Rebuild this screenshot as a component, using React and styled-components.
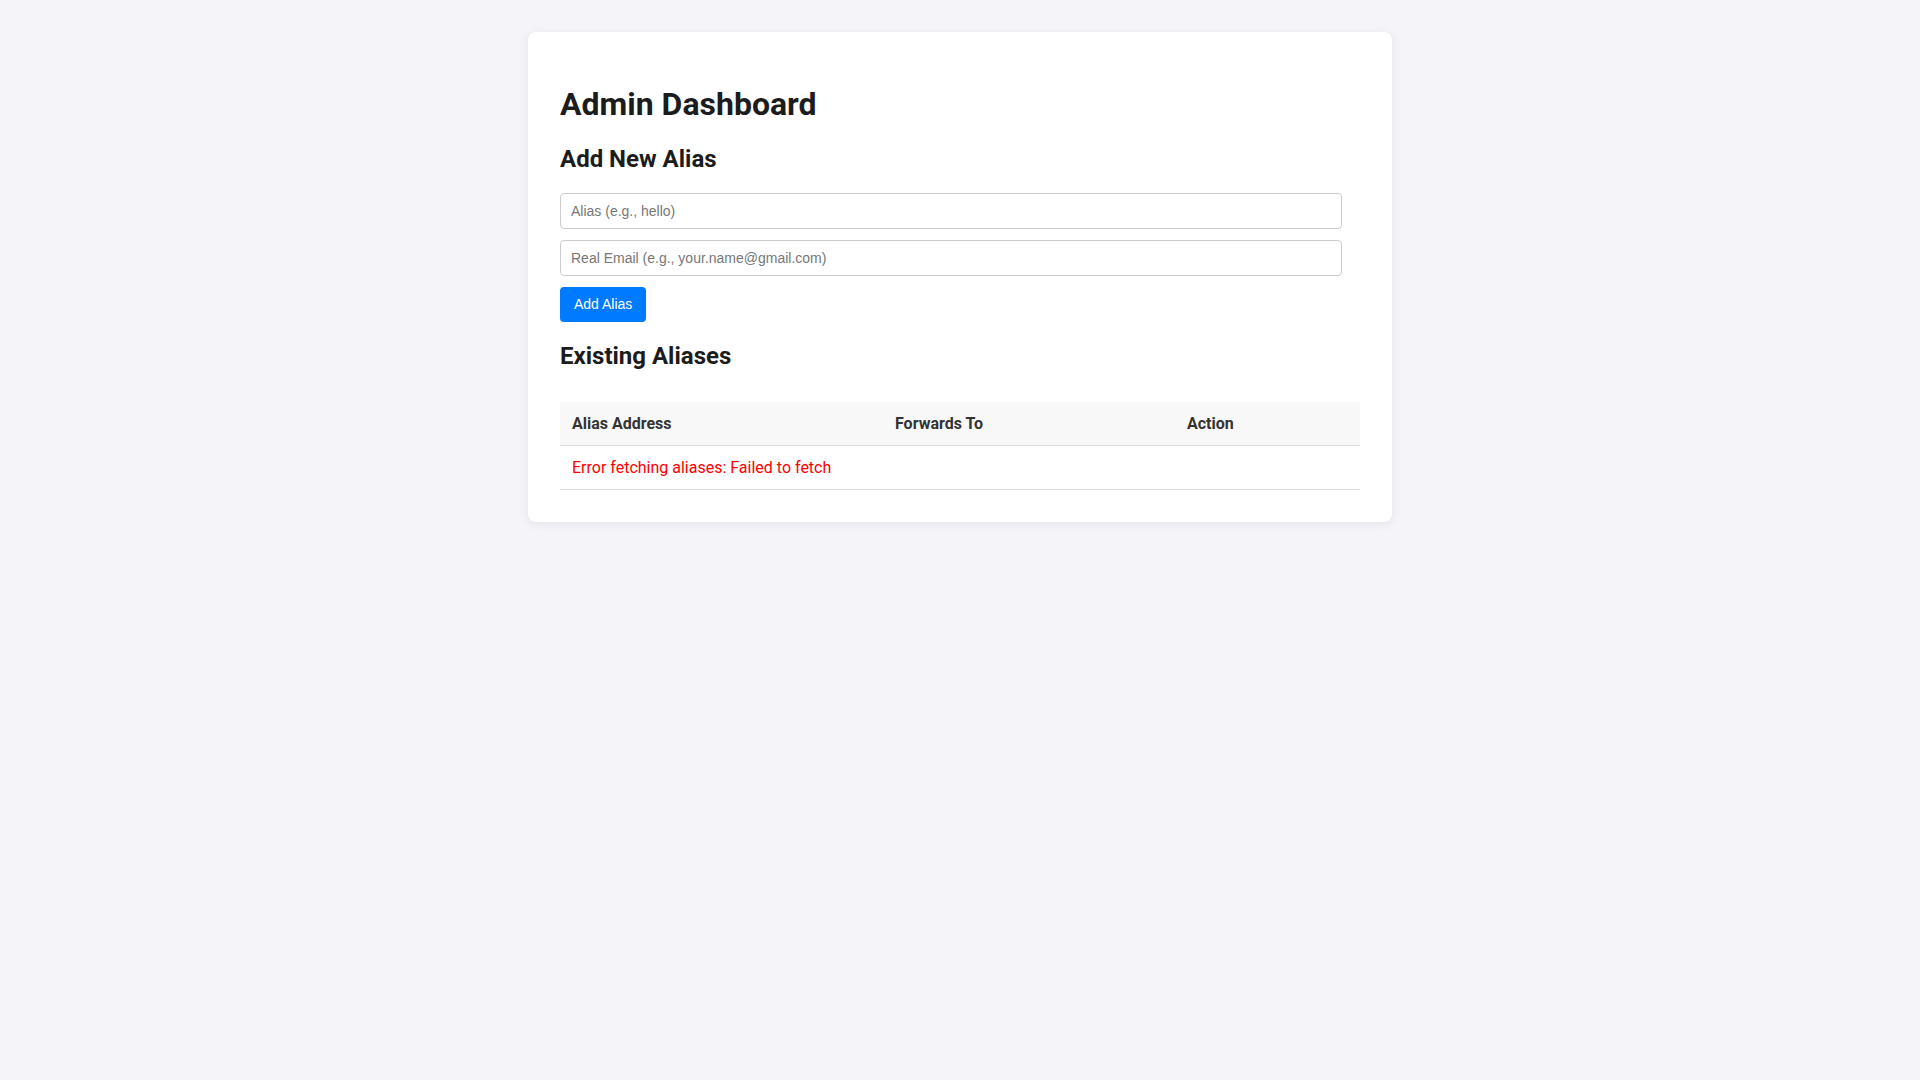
import styled, { createGlobalStyle } from "styled-components";
import { useState } from "react";

const GlobalStyle = createGlobalStyle`
  body {
    margin: 0;
    padding: 32px 0;
    background: #f4f4f9;
    font-family: Roboto, "Liberation Sans", sans-serif;
    color: #222;
  }
`;

const Card = styled.div`
  max-width: 800px;
  margin: 0 auto;
  padding: 32px;
  background: #fff;
  border-radius: 8px;
  box-shadow: 0 2px 10px rgba(0, 0, 0, 0.08);
  display: flow-root;
`;

const Title = styled.h1`
  font-size: 32px;
  font-weight: 700;
  margin: 21.44px 0;
  color: #1c1c1c;
`;

const SectionTitle = styled.h2`
  font-size: 24px;
  font-weight: 700;
  margin: 19.92px 0;
  color: #1c1c1c;
`;

const Form = styled.form`
  display: flex;
  flex-direction: column;
  align-items: flex-start;
  gap: 11.2px;
`;

const Input = styled.input`
  box-sizing: border-box;
  width: 782px;
  padding: 9px 10px;
  font-family: "Liberation Sans", Arial, sans-serif;
  font-size: 14px;
  line-height: 16px;
  height: 36px;
  border: 1px solid #ccc;
  border-radius: 4px;
  outline: none;

  &::placeholder {
    color: #777;
  }
`;

const Button = styled.button`
  padding: 9px 14px;
  font-family: "Liberation Sans", Arial, sans-serif;
  font-size: 14px;
  line-height: 16px;
  height: 34.6px;
  color: #fff;
  background: #007bff;
  border: none;
  border-radius: 4px;
  cursor: pointer;
`;

const Table = styled.table`
  width: 100%;
  margin-top: 32px;
  border-collapse: collapse;
  table-layout: fixed;
  font-size: 16px;
`;

const Th = styled.th`
  width: ${(p) => p.$w || "auto"};
  padding: 12px;
  text-align: left;
  font-weight: 700;
  color: #333;
  background: #f8f8f8;
  border-bottom: 1px solid #ddd;
`;

const Td = styled.td`
  padding: 12px;
  border-bottom: 1px solid #ddd;
  color: ${(p) => (p.$error ? "#ff0000" : "#333")};
`;

export default function App() {
  const [alias, setAlias] = useState("");
  const [email, setEmail] = useState("");

  return (
    <>
      <GlobalStyle />
      <Card>
        <Title>Admin Dashboard</Title>
        <SectionTitle>Add New Alias</SectionTitle>
        <Form onSubmit={(e) => e.preventDefault()}>
          <Input
            placeholder="Alias (e.g., hello)"
            value={alias}
            onChange={(e) => setAlias(e.target.value)}
          />
          <Input
            placeholder="Real Email (e.g., your.name@gmail.com)"
            value={email}
            onChange={(e) => setEmail(e.target.value)}
          />
          <Button type="submit">Add Alias</Button>
        </Form>

        <SectionTitle>Existing Aliases</SectionTitle>
        <Table>
          <thead>
            <tr>
              <Th $w="299px">Alias Address</Th>
              <Th $w="268px">Forwards To</Th>
              <Th>Action</Th>
            </tr>
          </thead>
          <tbody>
            <tr>
              <Td colSpan={3} $error>
                Error fetching aliases: Failed to fetch
              </Td>
            </tr>
          </tbody>
        </Table>
      </Card>
    </>
  );
}
